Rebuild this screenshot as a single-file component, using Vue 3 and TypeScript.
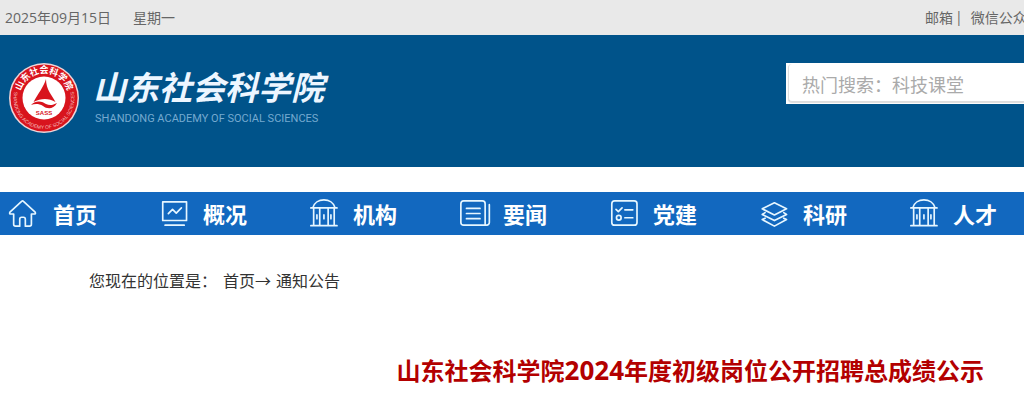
<script setup lang="ts">
type IconName = 'home' | 'chart' | 'hall' | 'news' | 'list' | 'layers'

const navItems: { label: string; icon: IconName }[] = [
  { label: '首页', icon: 'home' },
  { label: '概况', icon: 'chart' },
  { label: '机构', icon: 'hall' },
  { label: '要闻', icon: 'news' },
  { label: '党建', icon: 'list' },
  { label: '科研', icon: 'layers' },
  { label: '人才', icon: 'hall' },
]
</script>

<template>
  <div class="page">
    <div class="topbar">
      <span>2025年09月15日</span>
      <span>星期一</span>
      <div class="quick"><a href="#">邮箱</a><i>|</i><a href="#">微信公众号</a></div>
    </div>

    <header class="banner">
      <a href="#" class="brand" aria-label="山东社会科学院">
        <svg class="seal" viewBox="0 0 72 72" aria-hidden="true">
          <circle cx="36" cy="35" r="35" fill="#efd5d8" />
          <circle cx="36" cy="35" r="33.500" fill="#d8141d" />
          <circle cx="36" cy="35" r="21.500" fill="#fff" />
          <defs>
            <path id="arc-top" d="M12.500 39 A24 24 0 1 1 59.500 39" />
            <path id="arc-bottom" d="M6 30 A30.500 30.500 0 1 0 66 30" />
          </defs>
          <text class="seal-cn"><textPath href="#arc-top" startOffset="50%" text-anchor="middle">山东社会科学院</textPath></text>
          <text class="seal-en"><textPath href="#arc-bottom" startOffset="50%" text-anchor="middle">SHANDONG ACADEMY OF SOCIAL SCIENCES</textPath></text>
          <path d="M38 16 C36 23 30 31 25.500 39 C33 35 41 35 47.500 39 C44 32 38 27 38 16Z" fill="#d8141d" />
          <path d="M23 42 C29 36 35 39 38 41 C42 43 45 42 49 40 C45 47 39 46 35 43 C31 40.500 27 40.500 23 42Z" fill="#d8141d" />
          <text class="seal-abbr" x="36" y="52" text-anchor="middle">SASS</text>
        </svg>
        <span class="wordmark">
          <span class="name">山东社会科学院</span>
          <span class="latin">SHANDONG ACADEMY OF SOCIAL SCIENCES</span>
        </span>
      </a>
      <form class="search" @submit.prevent>
        <input type="text" aria-label="搜索" placeholder="热门搜索：科技课堂" />
      </form>
    </header>

    <nav class="nav">
      <a v-for="item in navItems" :key="item.label" href="#">
        <svg viewBox="0 0 30 30" aria-hidden="true">
          <path v-if="item.icon === 'home'" d="M15.500 1.500 Q14.500 .5 13.500 1.500 L1 13 Q0 15 2 15 H5 V26 Q5 28 7 28 H11.500 V20.500 Q11.500 18.500 13.500 18.500 H15.500 Q17.500 18.500 17.500 20.500 V28 H22 Q24 28 24 26 V15 H27 Q29 15 28 13 Z" />
          <path v-else-if="item.icon === 'chart'" d="M4 2 H29.500 V22 H4Z M10 14.500 L14.500 10 L18.500 14 L24 8.500 M6.500 27 H27" />
          <g v-else-if="item.icon === 'hall'">
            <path d="M4 8.500 C7 -3 25 -3 28 8.500 M2 8.500 H30 M2 27.500 H30 M5 9 V27 M11.500 9 V27 M20.500 9 V27 M27 9 V27" />
            <path d="M8.500 16 V20 M16 16 V20 M23.500 16 V20" />
          </g>
          <path v-else-if="item.icon === 'news'" d="M5 1 H25 Q28 1 28 4 V27 H5 Q2 27 2 24 V4 Q2 1 5 1Z M32.500 5 V24 Q32.500 27 28 27 M8 9 H22.500 M8 14.500 H22.500 M8 20 H22.500" />
          <g v-else-if="item.icon === 'list'">
            <path d="M6 1 H27 Q30 1 30 4 V24 Q30 27 27 27 H6 Q3 27 3 24 V4 Q3 1 6 1Z M7.500 10 L10 12.500 L14 8.500 M17 10.500 H25.500 M17 19 H25.500" />
            <circle cx="10.500" cy="19" r="2.500" />
          </g>
          <path v-else d="M16.500 3 L29.500 9.500 L16.500 16 L3.500 9.500Z M6.500 13.500 L3.500 15.500 L16.500 22 L29.500 15.500 L26.500 13.500 M6.500 19.500 L3.500 21 L16.500 28 L29.500 21 L26.500 19.500" />
        </svg>
        <span>{{ item.label }}</span>
      </a>
    </nav>

    <main>
      <div class="crumbs">
        <span>您现在的位置是：</span>
        <a href="#">首页</a><span class="arrow">→</span><a href="#">通知公告</a>
      </div>
      <h1>山东社会科学院<span>2024</span>年度初级岗位公开招聘总成绩公示</h1>
    </main>
  </div>
</template>

<style>
body {
  margin: 0;
  background: #fff;
}
</style>

<style scoped>
.page {
  overflow: hidden;
  font-family: "Open Sans", "Noto Sans CJK SC", sans-serif;
  color: #333;
  white-space: nowrap;
}
a {
  color: inherit;
  text-decoration: none;
}
.topbar {
  display: flex;
  align-items: center;
  gap: 22px;
  box-sizing: border-box;
  height: 35px;
  padding: 0 0 2px 5px;
  background: #e9e9e9;
  color: #666;
  font-size: 14px;
}
.quick {
  display: flex;
  width: 99px;
  margin-left: auto;
}
.quick i {
  margin: 0 8px 0 2px;
  font-style: normal;
}
.banner {
  display: flex;
  align-items: flex-start;
  justify-content: space-between;
  box-sizing: border-box;
  height: 132px;
  padding: 28px 0 0 8px;
  background: #00538a;
}
.brand {
  display: flex;
}
.seal {
  width: 72px;
  height: 72px;
  overflow: visible;
}
.seal-cn {
  font: bold 9px "Noto Sans CJK SC", sans-serif;
  fill: #fff;
}
.seal-en {
  font: 5px "Liberation Sans", sans-serif;
  fill: #f5bcbc;
}
.seal-abbr {
  font: bold 6px "Liberation Sans", sans-serif;
  fill: #d8141d;
}
.wordmark {
  display: flex;
  flex-direction: column;
  padding-left: 13px;
}
.name {
  font: italic bold 33px/46px "Noto Sans CJK SC", sans-serif;
  color: #edf6ff;
}
.latin {
  padding-left: 2px;
  font: 11px/19px Roboto, sans-serif;
  color: #75aad0;
}
.search {
  box-sizing: border-box;
  width: 238px;
  height: 41px;
  padding: 1px 0 2px 2px;
  background: #fff;
}
.search input {
  box-sizing: border-box;
  width: 100%;
  height: 38px;
  padding: 2px 0 0 13px;
  border: 1px solid #ddd;
  border-width: 0 0 1px 1px;
  border-radius: 4px 0 0 4px;
  background: #fff;
  box-shadow: 0 1px 1px #ddd;
  font: 18px "Noto Sans CJK SC", sans-serif;
}
.search input::placeholder {
  color: #aaa;
  opacity: 1;
}
.nav {
  display: flex;
  height: 43px;
  margin-top: 25px;
  padding-left: 9px;
  background: #1268bf;
}
.nav a {
  display: flex;
  flex: 0 0 150px;
  align-items: center;
  gap: 16px;
  color: #fff;
  font: bold 22px/43px "Noto Sans CJK SC", sans-serif;
}
.nav svg {
  width: 28px;
  height: 28px;
  overflow: visible;
  fill: none;
  stroke: #e6f6ff;
  stroke-width: 1.8;
  stroke-linecap: round;
  stroke-linejoin: round;
}
.crumbs {
  display: flex;
  padding: 33px 0 0 89px;
  font: 16px/24px "Noto Sans CJK SC", sans-serif;
}
.crumbs a:first-of-type {
  margin-left: 6px;
}
.arrow {
  margin-right: 5px;
}
h1 {
  margin: 60px 40px 0 0;
  color: #b30000;
  font: bold 24px/36px "Noto Sans CJK SC", sans-serif;
  text-align: right;
}
h1 span {
  font: bold 26px/36px "Open Sans", sans-serif;
}
</style>
